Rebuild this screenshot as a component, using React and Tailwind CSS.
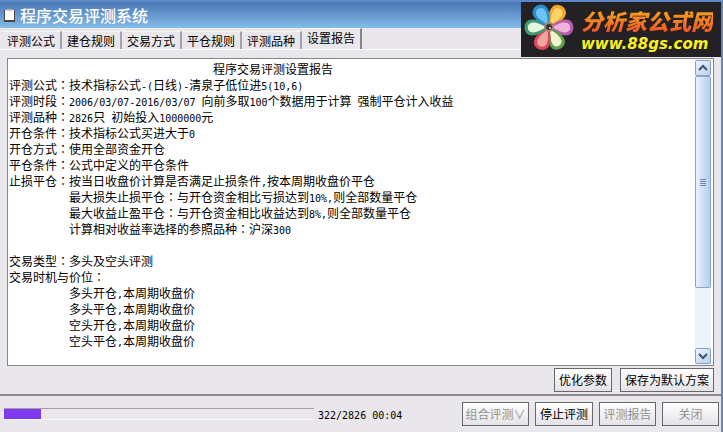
import React, { useState } from 'react';

const TABS = ['评测公式', '建仓规则', '交易方式', '平仓规则', '评测品种', '设置报告'];

const REPORT = [
  { text: '评测公式：技术指标公式-(日线)-清泉子低位进5(10,6)' },
  { text: '评测时段：2006/03/07-2016/03/07 向前多取100个数据用于计算 强制平仓计入收益' },
  { text: '评测品种：2826只 初始投入1000000元' },
  { text: '开仓条件：技术指标公式买进大于0' },
  { text: '开仓方式：使用全部资金开仓' },
  { text: '平仓条件：公式中定义的平仓条件' },
  { text: '止损平仓：按当日收盘价计算是否满足止损条件,按本周期收盘价平仓' },
  { text: '最大损失止损平仓：与开仓资金相比亏损达到10%,则全部数量平仓', indent: true },
  { text: '最大收益止盈平仓：与开仓资金相比收益达到8%,则全部数量平仓', indent: true },
  { text: '计算相对收益率选择的参照品种：沪深300', indent: true },
  { text: '' },
  { text: '交易类型：多头及空头评测' },
  { text: '交易时机与价位：' },
  { text: '多头开仓,本周期收盘价', indent: true },
  { text: '多头平仓,本周期收盘价', indent: true },
  { text: '空头开仓,本周期收盘价', indent: true },
  { text: '空头平仓,本周期收盘价', indent: true },
];

const PETALS = [
  { angle: 32, color: '#f0a428', light: '#fbd468' },
  { angle: 92, color: '#b85cb0', light: '#f0b4dc' },
  { angle: 152, color: '#5ca04c', light: '#f0f4d0' },
  { angle: 205, color: '#d8485c', light: '#f4a49c' },
  { angle: 268, color: '#3c9c6c', light: '#e4f6e0' },
  { angle: 330, color: '#2c8cd0', light: '#6cc4f0' },
];

// Latin runs are half the width of a Chinese character
const Mixed = ({ text }) =>
  text.split(/([\x20-\x7e]+|：)/).map((part, i) => {
    if (part === '：') return <span key={i} className="font-['Noto_Sans_CJK_TC',sans-serif]">{part}</span>;
    if (i % 2) return <span key={i} className="font-['DejaVu_Sans_Mono',monospace] text-[10px]">{part}</span>;
    return part;
  });

const PushButton = ({ children, className = '', ...props }) => (
  <button
    type="button"
    className={`h-6 whitespace-nowrap border border-[#686868] bg-linear-to-b from-white to-[#e4e2e6] text-center leading-5 text-black disabled:text-[#929292] ${className}`}
    {...props}
  >
    {children}
  </button>
);

const ScrollArrow = ({ label, d }) => (
  <button type="button" aria-label={label} className="flex h-4 w-full shrink-0 items-center justify-center rounded-xs border border-[#8ba0bd] bg-linear-to-br from-[#eef5fd] to-[#b4d0ef]">
    <svg viewBox="0 0 10 8" className="h-2 w-3" fill="none" stroke="#41516d" strokeWidth="2">
      <path d={d} />
    </svg>
  </button>
);

const Banner = () => (
  <a href="#home" className="absolute top-0.5 right-0 flex h-[55px] w-[200px] items-center bg-[#232123]">
    <svg viewBox="0 0 56 55" className="h-[55px] w-14 shrink-0">
      {PETALS.map((p) => (
        <g key={p.angle} transform={`rotate(${p.angle} 28 25)`}>
          <path d="M28 24C23 19 20 14 20 8C20 -2 36 -2 36 8C36 14 33 19 28 24Z" fill={p.color} />
          <path d="M28 22C25 17 23 13 23 9C23 2 33 2 33 9C33 13 31 17 28 22Z" fill={p.light} />
        </g>
      ))}
      <circle cx="28" cy="25" r="5" fill="#a8806c" />
      <circle cx="28" cy="25" r="3" fill="#343434" />
      <circle cx="29" cy="26" r="1" fill="#e4dcd4" />
    </svg>
    <span className="flex flex-col whitespace-nowrap pl-1 font-bold italic">
      <span className="bg-linear-to-b from-[#f8b020] to-[#f04c20] bg-clip-text text-[22px] leading-7 font-black text-transparent">分析家公式网</span>
      <span className="font-['DejaVu_Sans',sans-serif] text-[15px] leading-5 text-[#f8f020]">www.88gs.com</span>
    </span>
  </a>
);

const App = () => {
  const [active, setActive] = useState(5);
  const done = 322;
  const total = 2826;

  return (
    <div className="relative flex min-h-screen flex-col border-r-2 border-[#6486bc] bg-[#e9e7eb] font-['Noto_Sans_CJK_SC',sans-serif] text-xs text-black">
      <header className="flex h-7 items-center gap-1 border-t-2 border-[#5b87c9] bg-linear-to-b from-[#4a76b5] to-[#85bce8] pl-1">
        <svg viewBox="0 0 12 14" className="h-3.5 w-3">
          <path d="M0 2h11v12H0z" fill="#4c4640" />
          <path d="M1 2h9v10H1z" fill="#fff" />
          <path d="M3 1h5v2H3z" fill="#c8b8a0" />
        </svg>
        <h1 className="text-base leading-6 font-medium text-white">程序交易评测系统</h1>
      </header>

      <div role="tablist" className="flex h-[22px] items-end border-b border-white pl-0.5">
        {TABS.map((tab, i) => (
          <button
            key={tab}
            type="button"
            role="tab"
            aria-selected={i === active}
            onClick={() => setActive(i)}
            className={`w-[60px] shrink-0 whitespace-nowrap border-t border-r-2 border-t-[#f6f5f7] text-center leading-4 ${i === active ? 'h-[21px] border-r-[#858388] pb-0.5' : 'h-[18px] border-r-[#a5a3a8]'}`}
          >
            {tab}
          </button>
        ))}
      </div>

      <main className="flex flex-1 flex-col px-[7px] pt-2">
        <section className="flex flex-1 border border-[#858585] bg-white">
          <div className="flex-1 whitespace-pre pt-0.5 pl-px leading-4">
            <h2 className="pl-[204px]">程序交易评测设置报告</h2>
            {REPORT.map((line, i) => (
              <p key={i} className={`h-4 ${line.indent ? 'pl-[60px]' : ''}`}>
                <Mixed text={line.text} />
              </p>
            ))}
          </div>
          <div className="mr-0.5 flex w-4 flex-col bg-[#eef4fc] py-px">
            <ScrollArrow label="向上" d="M1 6L5 2L9 6" />
            <div className="flex-1">
              <div className="flex h-[78%] flex-col items-center justify-center gap-px rounded-xs border border-[#8ba5c4] bg-linear-to-r from-[#e8f2fd] to-[#b0cff0]">
                {[0, 1, 2, 3].map((n) => (
                  <span key={n} className="h-px w-1.5 bg-[#7088a8]" />
                ))}
              </div>
            </div>
            <ScrollArrow label="向下" d="M1 2L5 6L9 2" />
          </div>
        </section>
        <div className="flex justify-end gap-2 pt-0.5 pb-0.5">
          <PushButton className="w-[58px]">优化参数</PushButton>
          <PushButton className="w-[94px]">保存为默认方案</PushButton>
        </div>
      </main>

      <footer className="flex h-[38px] items-center border-t-2 border-[#8b898f] pr-0.5 pl-1">
        <div role="progressbar" aria-label="评测进度" aria-valuenow={done} aria-valuemax={total} className="h-3 flex-1 border-t border-b border-t-[#a09ea4] border-b-white">
          <div className="h-full bg-[#8038f0]" style={{ width: `${Math.ceil((done / total) * 100)}%` }} />
        </div>
        <span className="w-[148px] pl-1 whitespace-pre"><Mixed text={`${done}/${total} 00:04`} /></span>
        <div className="flex gap-1.5">
          <PushButton className="w-[67px]" disabled>组合评测∨</PushButton>
          <PushButton className="w-[58px]">停止评测</PushButton>
          <PushButton className="w-[57px]" disabled>评测报告</PushButton>
          <PushButton className="w-[57px]" disabled>关闭</PushButton>
        </div>
      </footer>

      <Banner />
    </div>
  );
};

export default App;
